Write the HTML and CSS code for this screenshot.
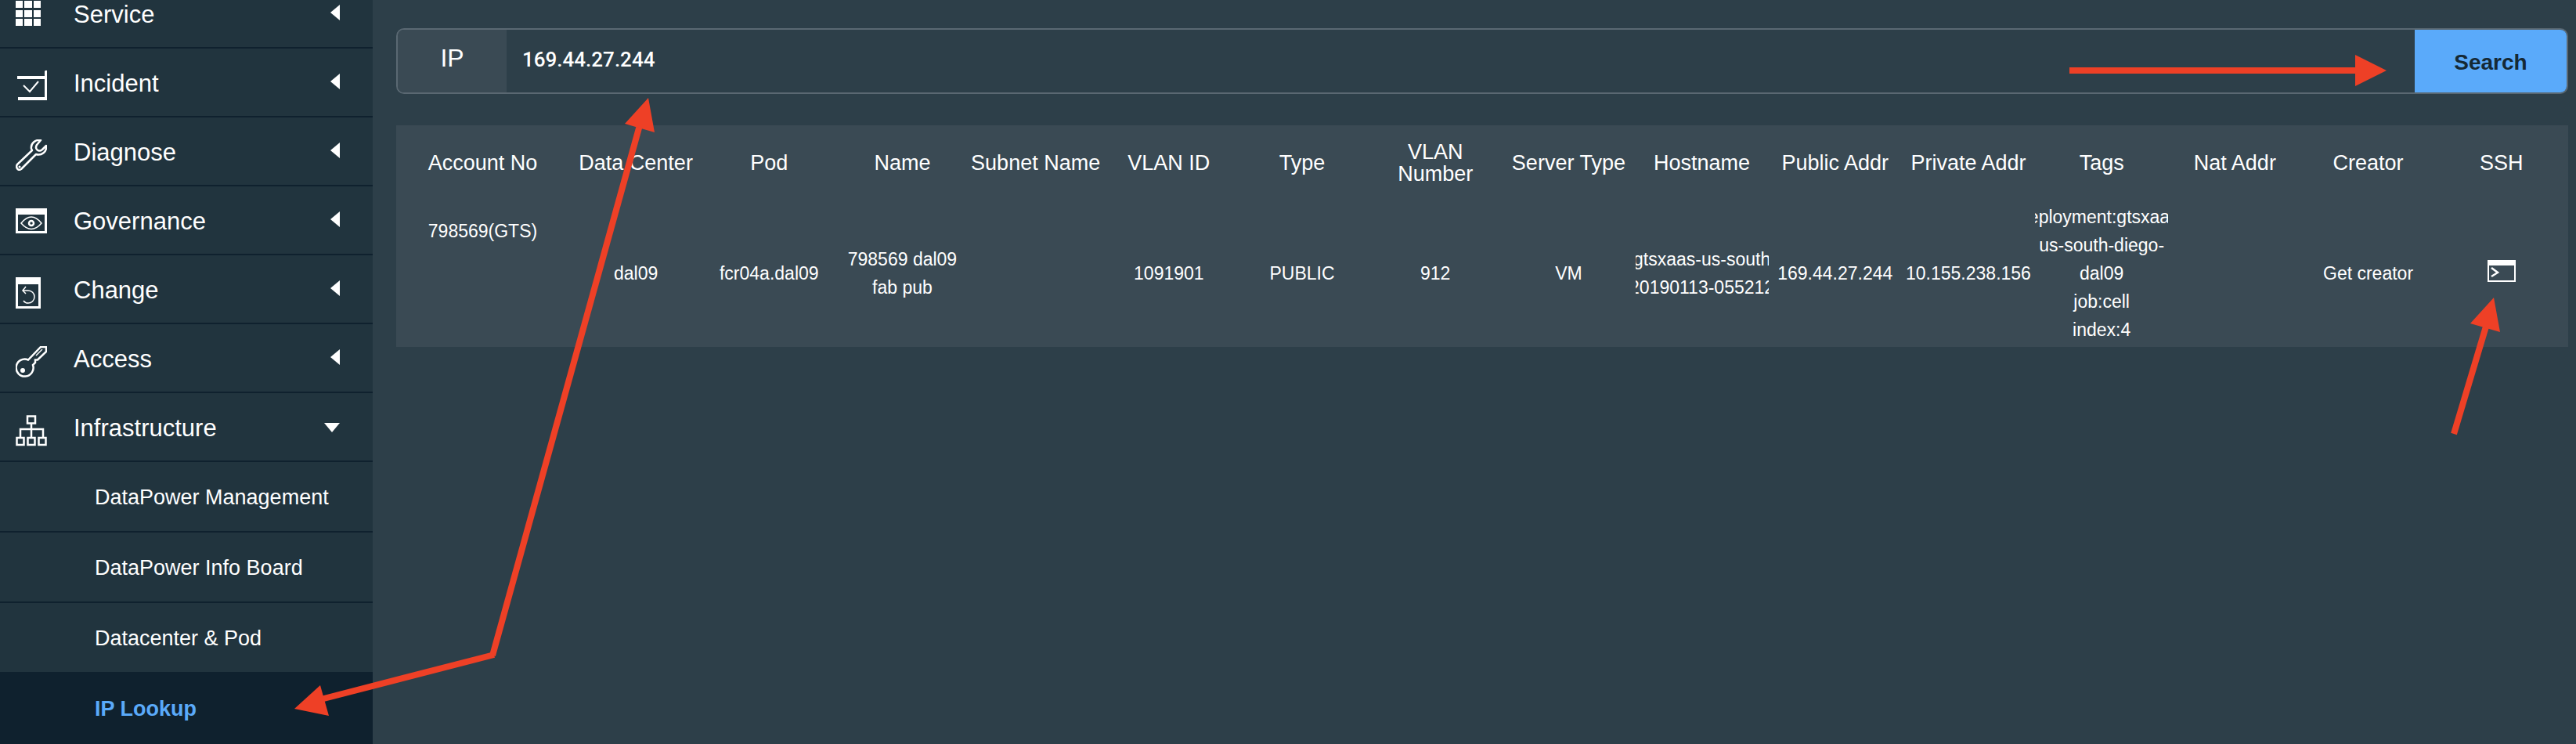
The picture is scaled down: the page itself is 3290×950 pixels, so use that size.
FILE: index.html
```html
<!DOCTYPE html>
<html lang="en">
<head>
<meta charset="utf-8">
<title>IP Lookup</title>
<link rel="stylesheet" href="styles.css">
</head>
<body>
<div class="app">
  <nav class="sidebar" aria-label="Main">
    <button class="group group-first" type="button">
      <svg class="icon" viewBox="0 0 40 40" aria-hidden="true"><path fill="#fff" d="M0 0h9v9H0zM11 0h10v9H11zM23 0h9v9h-9zM0 12h9v9H0zM11 12h10v9H11zM23 12h9v9h-9zM0 23h9v9H0zM11 23h10v9H11zM23 23h9v9h-9z"/></svg>
      <span class="group-name">Service</span><span class="caret"></span>
    </button>
    <button class="group" type="button">
      <svg class="icon" viewBox="0 0 40 40" aria-hidden="true"><path fill="#fff" d="M2 7h35V1l1-1h2v38H3v-4h34V11H2z"/><path fill="none" stroke="#fff" stroke-width="2" d="M10 19l8 8 11-13"/></svg>
      <span class="group-name">Incident</span><span class="caret"></span>
    </button>
    <button class="group" type="button">
      <svg class="icon" viewBox="0 0 40 40" aria-hidden="true"><path fill="none" stroke="#fff" stroke-width="2.500" stroke-linejoin="round" d="M32 1C25 0 19 5 20 12L21 14 2 32C0 35 2 39 5 39L7 38 26 19C33 21 40 16 39 8L34 13C29 17 24 12 27 7z"/><circle cx="5" cy="35" r="1.500" fill="#fff"/></svg>
      <span class="group-name">Diagnose</span><span class="caret"></span>
    </button>
    <button class="group" type="button">
      <svg class="icon" viewBox="0 0 40 40" aria-hidden="true"><path fill="#fff" fill-rule="evenodd" d="M0 0h40v32H0zM3 8v21h34V8z"/><path fill="none" stroke="#fff" stroke-width="1.500" d="M7 19Q20 3 33 19Q20 34 7 19z"/><circle cx="20" cy="19" r="3" fill="none" stroke="#fff" stroke-width="2.500"/></svg>
      <span class="group-name">Governance</span><span class="caret"></span>
    </button>
    <button class="group" type="button">
      <svg class="icon" viewBox="0 0 40 40" aria-hidden="true"><path fill="#fff" fill-rule="evenodd" d="M0 0h32v40H0zM3 9v28h26V9z"/><path fill="none" stroke="#fff" stroke-width="1.500" d="M13 12l-4 5 4 4M9 17h7a8 8 0 0 1 0 16q-4 0-6-3"/></svg>
      <span class="group-name">Change</span><span class="caret"></span>
    </button>
    <button class="group" type="button">
      <svg class="icon" viewBox="0 0 40 40" aria-hidden="true"><path fill="none" stroke="#fff" stroke-width="2.500" d="M39 1h-7L16 17.500A11 11 0 1 0 22 24L25 21V17.500H28L39 7z"/><path stroke="#fff" stroke-width="1.500" d="M26 12l8-8"/><circle cx="9" cy="31" r="3" fill="#fff"/></svg>
      <span class="group-name">Access</span><span class="caret"></span>
    </button>
    <button class="group" type="button" aria-expanded="true">
      <svg class="icon" viewBox="0 0 40 40" aria-hidden="true"><path fill="none" stroke="#fff" stroke-width="2.500" d="M15 1.500h10v9H15zM1.500 29h9v9h-9zM15.500 29h9v9h-9zM29.500 29h9v9h-9zM20 11v18M6 29V18h29v11"/></svg>
      <span class="group-name">Infrastructure</span><span class="caret caret-open"></span>
    </button>
    <a class="item" href="#management">DataPower Management</a>
    <a class="item" href="#board">DataPower Info Board</a>
    <a class="item" href="#pod">Datacenter &amp; Pod</a>
    <a class="item item-active" href="#lookup" aria-current="page">IP Lookup</a>
  </nav>
  <main class="content">
    <form class="search">
      <label class="search-label" for="ip">IP</label>
      <input class="search-input" id="ip" type="text" value="169.44.27.244">
      <button class="search-button" type="button">Search</button>
    </form>
    <table class="results">
      <colgroup><col class="col-account"><col span="15"></colgroup>
      <thead>
        <tr><th>Account No</th><th>Data Center</th><th>Pod</th><th>Name</th><th>Subnet Name</th><th>VLAN ID</th><th>Type</th><th>VLAN Number</th><th>Server Type</th><th>Hostname</th><th>Public Addr</th><th>Private Addr</th><th>Tags</th><th>Nat Addr</th><th>Creator</th><th>SSH</th></tr>
      </thead>
      <tbody>
        <tr>
          <td class="cell-account">798569(GTS)</td><td>dal09</td><td>fcr04a.dal09</td><td>798569 dal09<br>fab pub</td><td></td><td>1091901</td><td>PUBLIC</td><td>912</td><td>VM</td>
          <td><div class="lines"><span>gtsxaas-us-south</span><span>20190113-055212</span></div></td>
          <td>169.44.27.244</td><td>10.155.238.156</td>
          <td><div class="lines"><span>deployment:gtsxaas-</span><span>us-south-diego-</span><span>dal09</span><span>job:cell</span><span>index:4</span></div></td>
          <td></td><td>Get creator</td>
          <td class="cell-ssh"><button class="ssh" type="button" aria-label="Open SSH"><svg class="ssh-icon" viewBox="0 0 36 28" aria-hidden="true"><path fill="#fff" fill-rule="evenodd" d="M0 0h36v28H0zM2 7v19h32V7z"/><path fill="none" stroke="#fff" stroke-width="2.500" d="M5 10l8 6-8 5"/></svg></button></td>
        </tr>
      </tbody>
    </table>
  </main>
  <svg class="notes" viewBox="0 0 3290 950" aria-hidden="true">
    <g fill="none" stroke="#ee4026" stroke-width="8"><path d="M817 160L629 837"/><path d="M631 836L402 895"/><path d="M2643 90h368"/><path d="M3134 554L3175 417"/></g>
    <path fill="#ee4026" d="M828 125L798 158 836 169zM376 905L409 875 420 914zM3048 90L3008 70V110zM3185 380L3155 413 3193 424z"/>
  </svg>
</div>
</body>
</html>
```
FILE: styles.css
```css
* { box-sizing: border-box; }
body {
  margin: 0;
  background: #2d3f49;
  color: #fff;
  font-family: "Liberation Sans", Arial, sans-serif;
}
button, input { font-family: inherit; color: inherit; margin: 0; border: 0; background: none; }
.app { position: relative; display: flex; min-height: 100vh; overflow: hidden; }
.sidebar { flex: 0 0 476px; background: #21343e; }
.group {
  display: flex;
  align-items: flex-start;
  gap: 34px;
  width: 100%;
  height: 88px;
  padding: 26px 42px 0 20px;
  border-bottom: 2px solid #0f212e;
  text-align: left;
  font-size: 31px;
  line-height: 38px;
}
.group-first { height: 62px; padding-top: 0; }
.icon { flex: none; width: 40px; height: 40px; margin-top: 2px; }
.group-first .icon { margin-top: 1px; }
.group-name { flex: 1; }
.caret {
  width: 0;
  height: 0;
  margin-top: 6px;
  border: 10px solid transparent;
  border-right: 12px solid #fff;
  border-left: 0;
}
.caret-open {
  margin-top: 12px;
  border: 10px solid transparent;
  border-top: 12px solid #fff;
  border-bottom: 0;
}
.item {
  display: block;
  height: 90px;
  padding-left: 121px;
  border-bottom: 2px solid #0f212e;
  color: #fff;
  font-size: 27px;
  line-height: 90px;
  text-decoration: none;
}
.item-active { background: #0f212e; color: #5aaafa; font-weight: bold; }
.content { flex: 1; min-width: 0; padding: 36px 10px 0 30px; }
.search {
  display: flex;
  height: 84px;
  border: 2px solid #5a6872;
  border-radius: 10px;
  overflow: hidden;
}
.search-label {
  width: 139px;
  background: #3a4a54;
  font-size: 32px;
  line-height: 72px;
  text-align: center;
}
.search-input {
  flex: 1;
  padding: 0 20px 4px;
  font-family: Roboto, sans-serif;
  font-size: 26px;
  font-weight: 500;
}
.search-button { width: 194px; padding-top: 4px; background: #5aaafa; color: #152935; font-size: 28px; font-weight: bold; }
.results {
  width: 100%;
  margin-top: 40px;
  background: #3a4a54;
  border-collapse: collapse;
  table-layout: fixed;
  text-align: center;
}
.col-account { width: 221px; }
th { height: 98px; padding: 0 0 2px; font-size: 27px; font-weight: 500; line-height: 28px; }
td { height: 185px; padding: 0 0 3px; font-size: 23px; line-height: 36px; }
.cell-account { padding-top: 19px; vertical-align: top; }
.cell-ssh { padding-bottom: 12px; }
.lines { display: flex; flex-direction: column; align-items: center; overflow: hidden; white-space: nowrap; }
.ssh { display: inline-block; padding: 0; vertical-align: middle; }
.ssh-icon { display: block; width: 36px; height: 28px; }
.notes { position: absolute; top: 0; left: 0; width: 100%; pointer-events: none; }
```
